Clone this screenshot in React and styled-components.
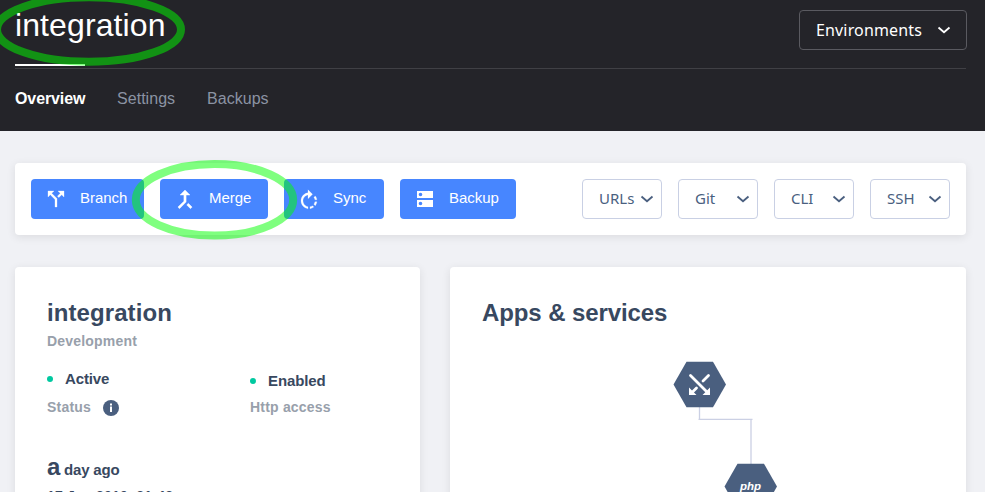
import React from "react";
import styled, { createGlobalStyle } from "styled-components";

const Global = createGlobalStyle`
  *, *::before, *::after { box-sizing: border-box; }
  html, body { margin: 0; height: 100%; overflow: hidden; }
  body { background: #f0f1f5; font-family: "Liberation Sans", Arial, sans-serif; }
  h1, h2, p { margin: 0; }
  button { font: inherit; margin: 0; cursor: pointer; }
`;

const Page = styled.div`
  position: relative;
  height: 492px;
  overflow: hidden;
`;

const Header = styled.header`
  height: 131px;
  padding: 0 19px 0 15px;
  background: #242429;
`;

const HeaderTop = styled.div`
  display: flex;
  justify-content: space-between;
  align-items: flex-start;
  height: 69px;
  border-bottom: 1px solid #404045;
`;

const PageTitle = styled.h1`
  padding-top: 5px;
  font-size: 32px;
  line-height: 40px;
  letter-spacing: 0.1px;
  font-weight: 400;
  color: #fff;
`;

const EnvironmentsButton = styled.button`
  display: flex;
  align-items: center;
  justify-content: space-between;
  width: 168px;
  height: 40px;
  margin: 10px -1px 0 0;
  padding: 0 15px 0 16px;
  border: 1px solid #5a5a60;
  border-radius: 4px;
  background: transparent;
  color: #fff;
  font-family: "Noto Sans", sans-serif;
  font-size: 16px;
  letter-spacing: 0.15px;
`;

const Tabs = styled.nav`
  display: flex;
  gap: 32px;
  margin-top: -5px;
`;

const Tab = styled.a`
  padding-top: 24px;
  border-top: 2px solid ${(p) => (p.$active ? "#fff" : "transparent")};
  font-size: 16px;
  line-height: 18px;
  letter-spacing: ${(p) => (p.$active ? "-0.1px" : "0.04px")};
  font-weight: ${(p) => (p.$active ? 700 : 400)};
  color: ${(p) => (p.$active ? "#fff" : "#8b93a3")};
  width: ${(p) => p.$width}px;
  white-space: nowrap;
`;

const Main = styled.main`
  display: flex;
  flex-direction: column;
  gap: 32px;
  padding: 32px 19px 0 15px;
`;

const Card = styled.section`
  background: #fff;
  border-radius: 4px;
  box-shadow: 0 2px 8px rgba(36, 36, 41, 0.1);
`;

const Toolbar = styled(Card)`
  display: flex;
  justify-content: space-between;
  height: 72px;
  padding: 16px;
`;

const Group = styled.div`
  display: flex;
  gap: 16px;
`;

const ActionButton = styled.button`
  display: flex;
  align-items: center;
  gap: 12px;
  width: ${(p) => p.$width}px;
  height: 40px;
  padding: 0 0 0 13px;
  border: 0;
  border-radius: 4px;
  background: #4786ff;
  color: #fff;
  font-size: 15px;
  line-height: 18px;
  white-space: nowrap;
`;

const ActionLabel = styled.span`
  margin-top: -2px;
  letter-spacing: -0.05px;
`;

const SelectButton = styled.button`
  display: flex;
  align-items: center;
  justify-content: space-between;
  width: 80px;
  height: 40px;
  padding: 0 7px 0 16px;
  border: 1px solid #c9d0e4;
  border-radius: 4px;
  background: #fff;
  color: #4a5f7f;
  font-family: "Noto Sans", sans-serif;
  font-size: 15px;
`;

const SelectLabel = styled.span`
  margin-top: -3px;
`;

const Columns = styled.div`
  display: grid;
  grid-template-columns: 405px 516px;
  gap: 30px;
`;

const Panel = styled(Card)`
  height: 400px;
  padding: 32px;
`;

const PanelTitle = styled.h2`
  font-size: 24px;
  line-height: 28px;
  letter-spacing: ${(p) => p.$tracking || 0}px;
  font-weight: 700;
  color: #384860;
`;

const Muted = styled.p`
  display: flex;
  align-items: center;
  gap: 12px;
  font-size: 14px;
  line-height: 16px;
  height: 16px;
  letter-spacing: 0.2px;
  font-weight: 700;
  color: #98a0ab;
`;

const Kind = styled(Muted)`
  margin-top: 6px;
`;

const Facts = styled.div`
  display: grid;
  grid-template-columns: 203px 1fr;
  margin-top: 21px;
`;

const Fact = styled.div`
  padding-top: ${(p) => p.$offset || 0}px;
`;

const FactValue = styled.p`
  display: flex;
  align-items: center;
  gap: 12px;
  margin-bottom: ${(p) => p.$space}px;
  font-size: 15px;
  line-height: 18px;
  letter-spacing: -0.12px;
  font-weight: 700;
  color: #384860;

  &::before {
    content: "";
    width: 6px;
    height: 6px;
    border-radius: 50%;
    background: #00c9a0;
  }
`;

const Info = styled.svg`
  margin-top: 2px;
`;

const Age = styled.p`
  margin-top: 38px;
  font-size: 15px;
  line-height: 28px;
  letter-spacing: -0.2px;
  font-weight: 700;
  color: #384860;

  &::first-letter { font-size: 24px; }
`;

const DateText = styled.p`
  margin-top: 4px;
  font-size: 14px;
  line-height: 16px;
  letter-spacing: 0.22px;
  font-weight: 700;
  color: #384860;
`;

const Graph = styled.svg`
  display: block;
  margin: 21px 0 0 178px;
`;

const GraphText = styled.text`
  font: italic 700 11.5px "Liberation Sans", Arial, sans-serif;
  fill: #fff;
`;

const Marks = styled.svg`
  position: absolute;
  inset: 0;
  pointer-events: none;
`;

const Chevron = () => (
  <svg width="14" height="8" viewBox="0 0 14 8" fill="none" stroke="currentColor" strokeWidth="1.8">
    <path d="M1.500 1.500 7 6.300l5.500-4.800" />
  </svg>
);

const Icon = ({ children }) => (
  <svg width="24" height="24" viewBox="0 0 24 24" fill="#fff">{children}</svg>
);

const actions = [
  { label: "Branch", width: 113, icon: <path d="m14 4 2.29 2.29-2.88 2.88 1.42 1.42 2.88-2.88L20 10V4zm-4 0H4v6l2.29-2.29 4.71 4.7V20h2v-8.41l-5.29-5.3z" stroke="#fff" strokeWidth="0.3" /> },
  { label: "Merge", width: 108, icon: <path d="M17 20.41 18.41 19 15 15.59 13.59 17 17 20.41zM7.5 8H11v5.59L5.59 19 7 20.41l6-6V8h3.5L12 3.5 7.5 8z" transform="translate(-1.2 -0.8) scale(1.1)" stroke="#fff" strokeWidth="0.4" /> },
  { label: "Sync", width: 100, icon: <path d="M15.55 5.55 11 1v3.07C7.06 4.56 4 7.92 4 12s3.05 7.44 7 7.93v-2.02c-2.84-.48-5-2.94-5-5.91s2.16-5.43 5-5.91V10l4.55-4.45zM19.93 11c-.17-1.39-.72-2.73-1.62-3.89l-1.42 1.42c.54.75.88 1.6 1.02 2.47h2.02zM13 17.9v2.02c1.39-.17 2.74-.71 3.9-1.61l-1.44-1.44c-.75.54-1.59.89-2.46 1.03zm3.89-2.42 1.42 1.41c.9-1.16 1.45-2.5 1.62-3.89h-2.02c-.14.87-.48 1.72-1.02 2.48z" transform="translate(0 1.8)" stroke="#fff" strokeWidth="0.2" /> },
  { label: "Backup", width: 116, icon: <path fillRule="evenodd" d="M4 4h16v7H4zM4 13h16v7H4zM7.5 5.700a1.800 1.800 0 1 0 0 3.600 1.800 1.800 0 0 0 0-3.600zM7.500 14.700a1.800 1.800 0 1 0 0 3.600 1.800 1.800 0 0 0 0-3.600z" /> },
];

export default function App() {
  return (
    <Page>
      <Global />
      <Header>
        <HeaderTop>
          <PageTitle>integration</PageTitle>
          <EnvironmentsButton>Environments <Chevron /></EnvironmentsButton>
        </HeaderTop>
        <Tabs>
          <Tab $active $width={70}>Overview</Tab>
          <Tab $width={58}>Settings</Tab>
          <Tab $width={62}>Backups</Tab>
        </Tabs>
      </Header>
      <Main>
        <Toolbar>
          <Group>
            {actions.map((a) => (
              <ActionButton key={a.label} $width={a.width}>
                <Icon>{a.icon}</Icon>
                <ActionLabel>{a.label}</ActionLabel>
              </ActionButton>
            ))}
          </Group>
          <Group>
            {["URLs", "Git", "CLI", "SSH"].map((label) => (
              <SelectButton key={label}>
                <SelectLabel>{label}</SelectLabel>
                <Chevron />
              </SelectButton>
            ))}
          </Group>
        </Toolbar>
        <Columns>
          <Panel>
            <PanelTitle $tracking={0.08}>integration</PanelTitle>
            <Kind>Development</Kind>
            <Facts>
              <Fact>
                <FactValue $space={11}>Active</FactValue>
                <Muted>
                  Status
                  <Info width="16" height="16" viewBox="0 0 16 16">
                    <circle cx="8" cy="8" r="8" fill="#4a5f7f" />
                    <path d="M7 3.500h2v2H7zM7 6.500h2V12H7z" fill="#fff" />
                  </Info>
                </Muted>
              </Fact>
              <Fact $offset={2}>
                <FactValue $space={9}>Enabled</FactValue>
                <Muted>Http access</Muted>
              </Fact>
            </Facts>
            <Age>a day ago</Age>
            <DateText>17 Jan 2019, 21:42</DateText>
          </Panel>
          <Panel>
            <PanelTitle $tracking={-0.1}>Apps &amp; services</PanelTitle>
            <Graph width="140" height="170" viewBox="660 348 140 170">
              <path d="M699.500 407v12M698.500 419.300h54M751 419v45" fill="none" stroke="#cbd0e4" strokeWidth="1.3" />
              <path d="M673.500 384.500 686.500 361.700h26.500l13 22.800-13 22.800h-26.500z" fill="#4a5f7f" />
              <path d="M724.500 486.500 737.500 463.700H764l13 22.800-13 22.800h-26.500z" fill="#4a5f7f" />
              <g fill="none" stroke="#fff" strokeWidth="2.8" strokeLinecap="round">
                <path d="m690.500 375.500 16 16M708.500 375.500l-5.500 5.500M696.500 388l-4 4" />
              </g>
              <path d="M710 387.500v7.500h-7.500zM689 387.500v7.500h7.500z" fill="#fff" />
              <GraphText x="740" y="490">php</GraphText>
            </Graph>
          </Panel>
        </Columns>
      </Main>
      <Marks width="985" height="492" fill="none" stroke="#00ff00" strokeOpacity="0.5" strokeWidth="8">
        <ellipse cx="89" cy="29.500" rx="92" ry="32.300" />
        <ellipse cx="214.500" cy="199.800" rx="78.700" ry="35.800" />
      </Marks>
    </Page>
  );
}
